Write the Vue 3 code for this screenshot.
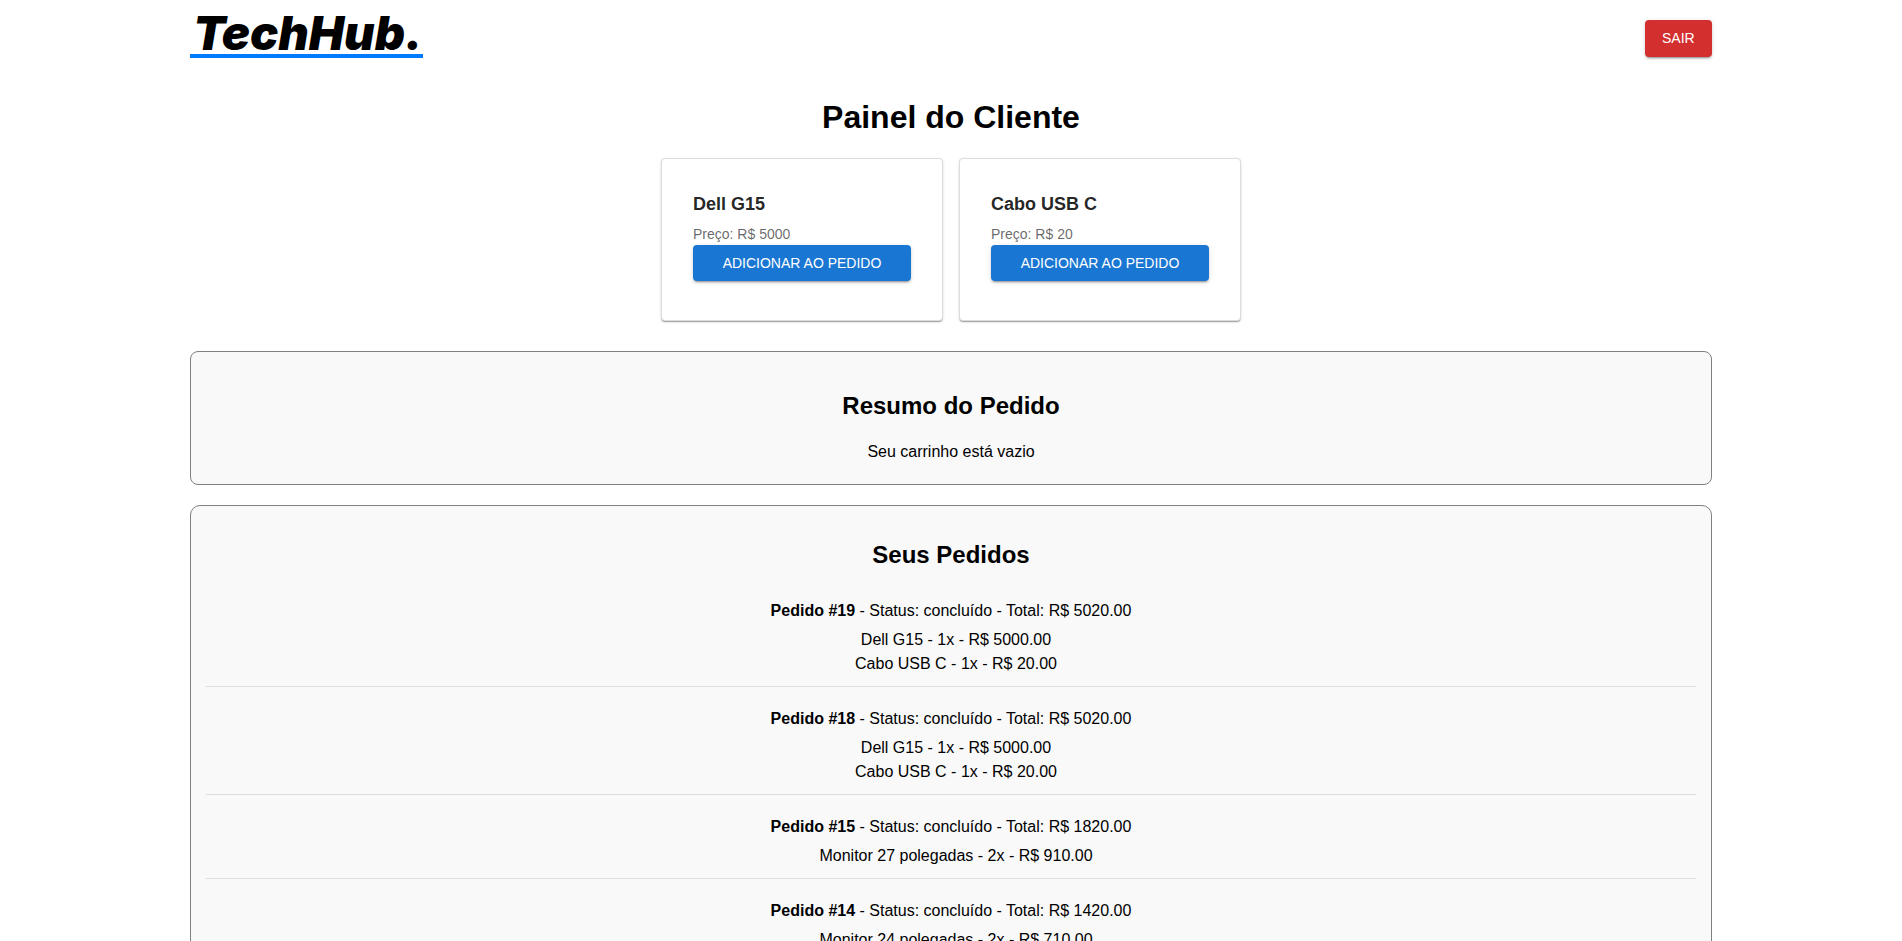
<script setup>
const products = [
  { id: 1, name: 'Dell G15', price: 5000 },
  { id: 2, name: 'Cabo USB C', price: 20 },
]

const orders = [
  {
    id: 19,
    status: 'concluído',
    total: 5020,
    items: [
      { name: 'Dell G15', qty: 1, price: 5000 },
      { name: 'Cabo USB C', qty: 1, price: 20 },
    ],
  },
  {
    id: 18,
    status: 'concluído',
    total: 5020,
    items: [
      { name: 'Dell G15', qty: 1, price: 5000 },
      { name: 'Cabo USB C', qty: 1, price: 20 },
    ],
  },
  {
    id: 15,
    status: 'concluído',
    total: 1820,
    items: [{ name: 'Monitor 27 polegadas', qty: 2, price: 910 }],
  },
  {
    id: 14,
    status: 'concluído',
    total: 1420,
    items: [{ name: 'Monitor 24 polegadas', qty: 2, price: 710 }],
  },
]
</script>

<template>
  <div class="page">
    <header class="topbar">
      <div class="logo">TechHub.</div>
      <button type="button" class="btn btn-danger">SAIR</button>
    </header>

    <main>
      <h1 class="title">Painel do Cliente</h1>

      <section class="products">
        <article v-for="p in products" :key="p.id" class="card">
          <h3 class="card-name">{{ p.name }}</h3>
          <p class="card-price">Preço: R$ {{ p.price }}</p>
          <button type="button" class="btn btn-primary">ADICIONAR AO PEDIDO</button>
        </article>
      </section>

      <section class="panel summary">
        <h2>Resumo do Pedido</h2>
        <p>Seu carrinho está vazio</p>
      </section>

      <section class="panel orders">
        <h2>Seus Pedidos</h2>
        <ul class="order-list">
          <li v-for="o in orders" :key="o.id" class="order">
            <div>
              <strong>Pedido #{{ o.id }}</strong> - Status: {{ o.status }} - Total: R$ {{ o.total.toFixed(2) }}
            </div>
            <ul class="order-items">
              <li v-for="i in o.items" :key="i.name">
                {{ i.name }} - {{ i.qty }}x - R$ {{ i.price.toFixed(2) }}
              </li>
            </ul>
          </li>
        </ul>
      </section>
    </main>
  </div>
</template>

<style>
html {
  scrollbar-width: none;
}
body {
  margin: 0;
  background: #fff;
}
</style>

<style scoped>
.page {
  padding: 12px 10% 20px;
  font-family: "Liberation Sans", Arial, sans-serif;
  font-size: 16px;
  line-height: 24px;
  color: #000;
}
h1, h2, h3, p, ul {
  margin: 0;
  padding: 0;
}
ul {
  list-style: none;
}
.topbar {
  display: flex;
  justify-content: space-between;
  align-items: flex-end;
}
.logo {
  padding-left: 3px;
  font-family: Inter, "Liberation Sans", sans-serif;
  font-size: 47px;
  font-weight: 900;
  font-style: italic;
  line-height: 42px;
  border-bottom: 4px solid #007bff;
}
.btn {
  border: 0;
  border-radius: 4px;
  font-family: inherit;
  font-size: 14px;
  font-weight: 400;
  line-height: 24px;
  color: #fff;
  cursor: pointer;
  box-shadow: 0 3px 1px -2px rgba(0, 0, 0, 0.2), 0 2px 2px 0 rgba(0, 0, 0, 0.14),
    0 1px 5px 0 rgba(0, 0, 0, 0.12);
}
.btn-danger {
  min-width: 67px;
  margin-bottom: 1px;
  padding: 6px 16px 7px;
  background: #d32f2f;
}
.btn-primary {
  width: 100%;
  padding: 6px 16px;
  background: #1976d2;
}
.title {
  margin: 40px 0 22px;
  font-size: 32px;
  line-height: 38px;
  text-align: center;
}
.products {
  display: flex;
  flex-wrap: wrap;
  justify-content: center;
  gap: 16px;
  margin-bottom: 30px;
}
.card {
  box-sizing: border-box;
  width: 282px;
  padding: 31px 31px 39px;
  border: 1px solid #ddd;
  border-radius: 4px;
  background: #fff;
  box-shadow: 0 2px 1px -1px rgba(0, 0, 0, 0.2), 0 1px 1px 0 rgba(0, 0, 0, 0.14),
    0 1px 3px 0 rgba(0, 0, 0, 0.12);
}
.card-name {
  margin-bottom: 4px;
  font-size: 18px;
  line-height: 29px;
  color: rgba(0, 0, 0, 0.87);
}
.card-price {
  font-size: 14px;
  line-height: 22px;
  color: rgba(0, 0, 0, 0.6);
}
.panel {
  margin-bottom: 20px;
  border: 1px solid gray;
  background: #f9f9f9;
  text-align: center;
}
.panel h2 {
  margin: 20px 0;
  font-size: 24px;
  line-height: 28px;
}
.summary {
  padding: 20px;
  border-radius: 8px;
}
.orders {
  padding: 15px;
  border-radius: 10px;
}
.order {
  margin-bottom: 10px;
  padding: 10px 0;
  border-bottom: 1px solid #ddd;
}
.order-items {
  margin-top: 5px;
  padding-left: 10px;
}
</style>
